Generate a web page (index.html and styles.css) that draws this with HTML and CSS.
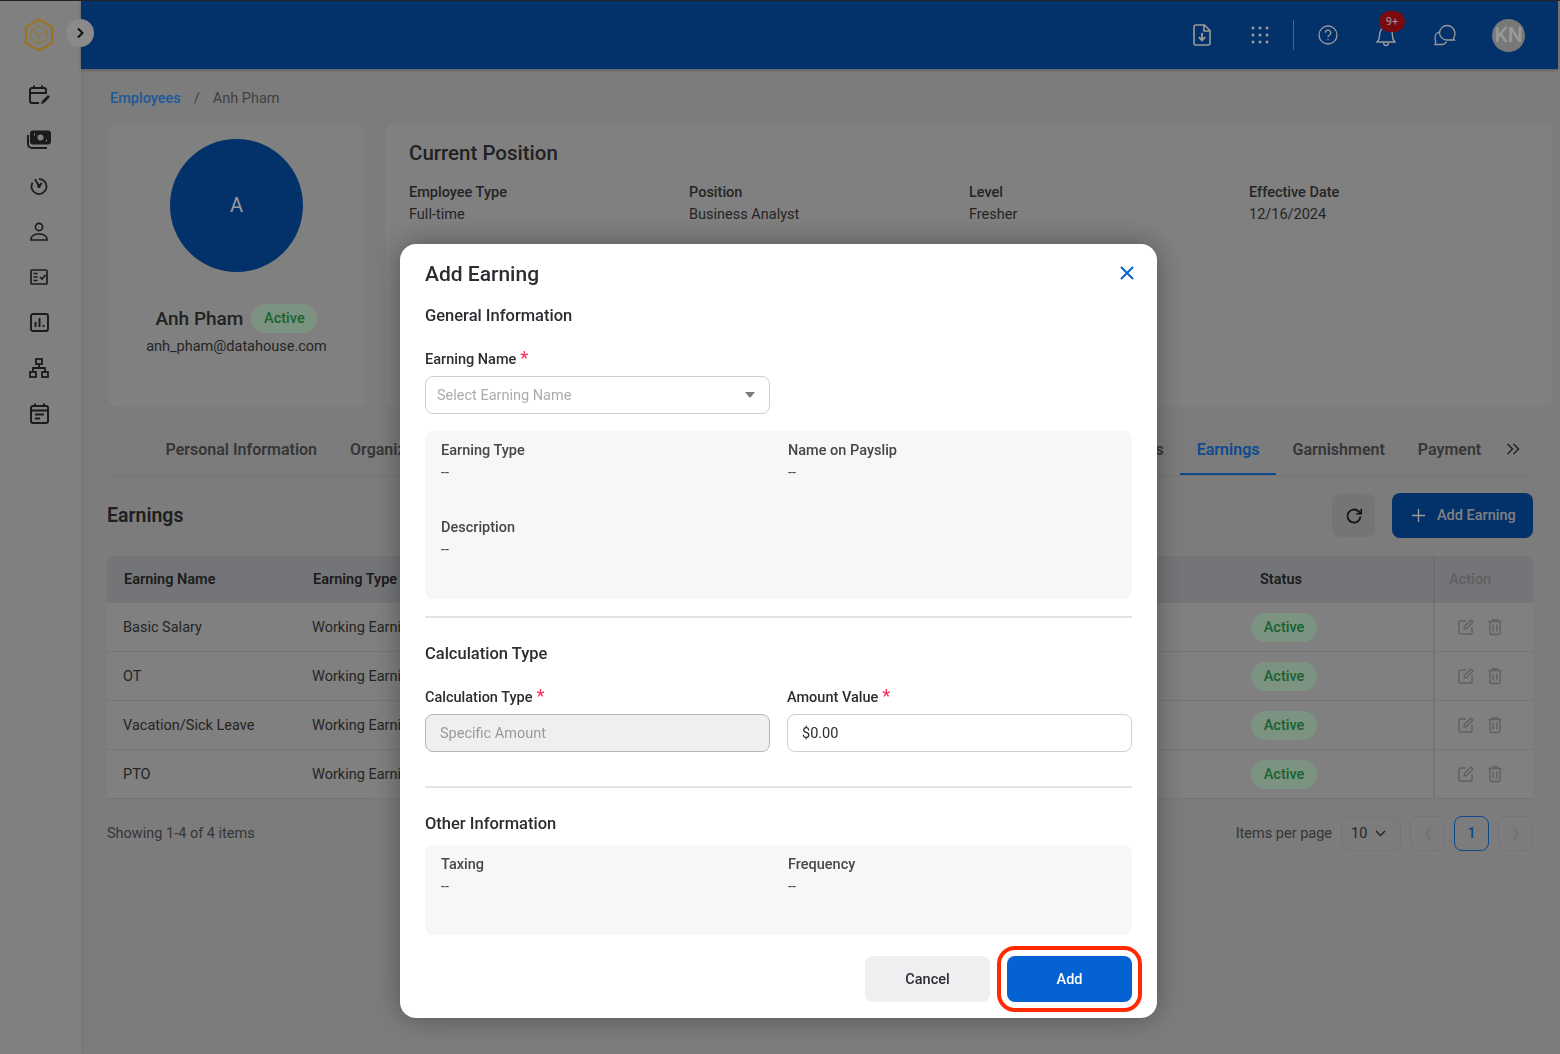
FILE: index.html
```html
<!DOCTYPE html>
<html lang="en">
<head>
  <meta charset="UTF-8">
  <title>Anh Pham - Earnings</title>
  <link rel="stylesheet" href="styles.css">
</head>
<body>
  <svg class="sprite" aria-hidden="true">
    <symbol id="i-edit" viewBox="0 0 18 18">
      <path d="M9 3H3.2A1.2 1.2 0 0 0 2 4.2v10.6A1.2 1.2 0 0 0 3.2 16h10.6a1.2 1.2 0 0 0 1.2-1.2V9" fill="none" stroke="currentColor" stroke-width="1.4"/>
      <path d="M7 11l.5-2.6L14 2l2 2-6.4 6.5z" fill="none" stroke="currentColor" stroke-width="1.3" stroke-linejoin="round"/>
    </symbol>
    <symbol id="i-trash" viewBox="0 0 18 18">
      <path d="M2.5 3.5h13M6.5 3.5V1.8h5v1.7M4 3.5V15a1.5 1.5 0 0 0 1.5 1.5h7A1.5 1.5 0 0 0 14 15V3.5M7.2 6.5v7M10.8 6.5v7" fill="none" stroke="currentColor" stroke-width="1.4"/>
    </symbol>
  </svg>

  <div class="app">
    <aside class="sidebar">
      <div class="logo">
        <svg width="30" height="34" viewBox="0 0 30 34" fill="none" stroke="#ffc23c">
          <path d="M15 1.5 28 9v16l-13 7.5L2 25V9z" stroke-width="2.2"/>
          <path d="M15 8l8 4.5v9L15 26l-8-4.5v-9zM7 12.5l8 4.5 8-4.5M15 17v9" stroke-width="1.2" stroke-opacity=".75"/>
        </svg>
      </div>
      <nav class="side-nav">
        <a class="side-link"><svg width="22" height="22" viewBox="0 0 22 22" fill="none" stroke="#2e2e2e" stroke-width="2"><path d="M11 19H4a2 2 0 0 1-2-2V6a2 2 0 0 1 2-2h12a2 2 0 0 1 2 2v4M2 9h16M6 1.5V5M14 1.5V5"/><path d="M13 20l1-3 6-6 2 2-6 6z" fill="#2e2e2e" stroke="none"/></svg></a>
        <a class="side-link"><svg width="24" height="20" viewBox="0 0 24 20" fill="none" stroke="#2e2e2e" stroke-width="2"><rect x="4" y="1.5" width="19" height="12" rx="2" fill="#2e2e2e"/><circle cx="13.5" cy="7.5" r="3" fill="#d5d5d5" stroke="none"/><path d="M1 5v9a4 4 0 0 0 4 4h15"/><path d="M7 4.5h1M19 10.5h1" stroke="#d5d5d5"/></svg></a>
        <a class="side-link"><svg width="18" height="18" viewBox="0 0 18 18" fill="none" stroke="#2e2e2e" stroke-width="1.8"><path d="M9 2a7.5 7.5 0 1 1-6.4 3.6"/><path d="M5 2.2 9 9l3-3" /><circle cx="9" cy="9" r="1" fill="#2e2e2e"/></svg></a>
        <a class="side-link"><svg width="18" height="19" viewBox="0 0 18 19" fill="none" stroke="#2e2e2e" stroke-width="1.6"><circle cx="9" cy="5" r="3.6"/><path d="M1 18v-1c0-3 3.6-5 8-5s8 2 8 5v1z"/></svg></a>
        <a class="side-link"><svg width="18" height="16" viewBox="0 0 18 16" fill="none" stroke="#2e2e2e" stroke-width="1.7"><rect x="1" y="1" width="16" height="14" rx="1"/><path d="M3.5 4.5h4M3.5 8h4M3.5 11.500h4M10 8l2 2 3.500-4"/></svg></a>
        <a class="side-link"><svg width="19" height="19" viewBox="0 0 19 19" fill="none" stroke="#2e2e2e" stroke-width="1.900"><rect x="1" y="1" width="17" height="17" rx="2"/><path d="M5.500 14V9M9.500 14V5M13.500 14v-2"/></svg></a>
        <a class="side-link"><svg width="20" height="20" viewBox="0 0 20 20" fill="none" stroke="#2e2e2e" stroke-width="1.800"><rect x="7" y="1" width="6" height="5"/><rect x="1" y="14" width="6" height="5"/><rect x="13" y="14" width="6" height="5"/><path d="M10 6v4M4 14v-4h12v4"/></svg></a>
        <a class="side-link"><svg width="19" height="21" viewBox="0 0 19 21" fill="none" stroke="#2e2e2e" stroke-width="2"><rect x="1" y="3" width="17" height="17" rx="2"/><path d="M1 7.500h17M5 .5V4M14 .5V4M5 11.500h9M5 15.500h5"/></svg></a>
      </nav>
    </aside>

    <div class="workspace">
      <header class="topbar">
        <svg class="top-icon" width="18" height="22" viewBox="0 0 18 22" fill="none" stroke="#fff" stroke-width="1.600"><path d="M11.500 1H3a2 2 0 0 0-2 2v16a2 2 0 0 0 2 2h12a2 2 0 0 0 2-2V6.500zM11 1v6h6"/><path d="M9 9v7M5.800 13.200 9 16.500l3.200-3.300" stroke-width="1.900"/></svg>
        <svg class="top-icon top-grid" width="18" height="18" viewBox="0 0 18 18" fill="#fff"><circle cx="2" cy="2" r="1.500"/><circle cx="9" cy="2" r="1.500"/><circle cx="16" cy="2" r="1.500"/><circle cx="2" cy="9" r="1.500"/><circle cx="9" cy="9" r="1.500"/><circle cx="16" cy="9" r="1.500"/><circle cx="2" cy="16" r="1.500"/><circle cx="9" cy="16" r="1.500"/><circle cx="16" cy="16" r="1.500"/></svg>
        <span class="top-divider"></span>
        <svg class="top-icon top-help" width="20" height="20" viewBox="0 0 20 20" fill="none" stroke="#fff" stroke-width="1.300"><circle cx="10" cy="10" r="9"/><path d="M7.300 7.800a2.700 2.700 0 1 1 4 2.400c-.9.500-1.300 1-1.300 2.100M10 14v1.300"/></svg>
        <div class="bell">
          <svg width="20" height="23" viewBox="0 0 20 23" fill="none" stroke="#fff" stroke-width="1.400"><path d="M1 18c2-1.500 2.500-3 2.500-6.500C3.500 6.500 6 3 10 3s6.500 3.500 6.500 8.500c0 3.500.5 5 2.500 6.500zM7.500 18.500c0 4 5 4 5 0"/></svg>
          <span class="badge">9+</span>
        </div>
        <svg class="top-icon top-chat" width="22" height="22" viewBox="0 0 22 22" fill="none" stroke="#fff" stroke-width="1.300"><path d="M13 1.500a8 8 0 0 1 8 7.500c0 2.500-.7 4-1.500 5.500l1 1.500H13a7.500 7.500 0 0 1-7.500-7.300A7.700 7.700 0 0 1 13 1.500z"/><path d="M5 8C2.500 9 1 11 1 14c0 1.300.3 2.400.8 3.300L1 20.500h7c2 0 3.500-1 4.500-3"/></svg>
        <div class="user-avatar">KN</div>
      </header>
      <button class="side-toggle" type="button" aria-label="Expand">
        <svg width="10" height="12" viewBox="0 0 10 12" fill="none" stroke="#1c1c1c" stroke-width="2"><path d="M3 1.500 7.500 6 3 10.500"/></svg>
      </button>

      <main class="content">
        <div class="breadcrumb"><a class="crumb-link">Employees</a><span class="crumb-sep">/</span><span>Anh Pham</span></div>

        <div class="cards">
          <section class="card profile">
            <div class="avatar">A</div>
            <div class="profile-name"><strong>Anh Pham</strong><span class="pill">Active</span></div>
            <div class="profile-mail">anh_pham@datahouse.com</div>
          </section>
          <section class="card position">
            <h2 class="position-title">Current Position</h2>
            <div class="position-grid">
              <div class="pos-field"><span class="pos-label">Employee Type</span><span>Full-time</span></div>
              <div class="pos-field"><span class="pos-label">Position</span><span>Business Analyst</span></div>
              <div class="pos-field"><span class="pos-label">Level</span><span>Fresher</span></div>
              <div class="pos-field pos-date"><span class="pos-label">Effective Date</span><span>12/16/2024</span></div>
            </div>
          </section>
        </div>

        <div class="tabs">
          <div class="tab-list">
            <a class="tab">Personal Information</a>
            <a class="tab">Organization</a>
            <span class="tab-gap"></span>
            <a class="tab">Deductions</a>
            <a class="tab active">Earnings</a>
            <a class="tab">Garnishment</a>
            <a class="tab">Payment</a>
          </div>
          <svg class="tab-more" width="14" height="12" viewBox="0 0 14 12" fill="none" stroke="#3a3a3a" stroke-width="1.500"><path d="M1.500 1 6.500 6l-5 5M7.500 1l5 5-5 5"/></svg>
        </div>

        <div class="toolbar">
          <h2 class="section-title">Earnings</h2>
          <div class="toolbar-actions">
            <button class="btn-refresh" type="button" aria-label="Refresh">
              <svg width="18" height="18" viewBox="0 0 18 18" fill="none" stroke="#1f1f1f" stroke-width="1.800"><path d="M15.500 9.500A6.500 6.500 0 1 1 13.500 4.300L16 6.500"/><path d="M16.300 1.800v5h-5" stroke-width="1.600"/></svg>
            </button>
            <button class="btn-add-earning" type="button">
              <svg width="15" height="15" viewBox="0 0 15 15" stroke="#fff" stroke-width="1.400"><path d="M7.500 1v13M1 7.500h13"/></svg>
              Add Earning
            </button>
          </div>
        </div>

        <div class="table">
          <div class="table-row table-head">
            <div class="cell">Earning Name</div>
            <div class="cell">Earning Type</div>
            <div class="cell">Status</div>
            <div class="cell cell-action">Action</div>
          </div>
          <div class="table-row">
            <div class="cell">Basic Salary</div>
            <div class="cell">Working Earning</div>
            <div class="cell cell-status"><span class="pill">Active</span></div>
            <div class="cell cell-action"><svg width="18" height="18"><use href="#i-edit"/></svg><svg width="18" height="18"><use href="#i-trash"/></svg></div>
          </div>
          <div class="table-row">
            <div class="cell">OT</div>
            <div class="cell">Working Earning</div>
            <div class="cell cell-status"><span class="pill">Active</span></div>
            <div class="cell cell-action"><svg width="18" height="18"><use href="#i-edit"/></svg><svg width="18" height="18"><use href="#i-trash"/></svg></div>
          </div>
          <div class="table-row">
            <div class="cell">Vacation/Sick Leave</div>
            <div class="cell">Working Earning</div>
            <div class="cell cell-status"><span class="pill">Active</span></div>
            <div class="cell cell-action"><svg width="18" height="18"><use href="#i-edit"/></svg><svg width="18" height="18"><use href="#i-trash"/></svg></div>
          </div>
          <div class="table-row">
            <div class="cell">PTO</div>
            <div class="cell">Working Earning</div>
            <div class="cell cell-status"><span class="pill">Active</span></div>
            <div class="cell cell-action"><svg width="18" height="18"><use href="#i-edit"/></svg><svg width="18" height="18"><use href="#i-trash"/></svg></div>
          </div>
        </div>

        <div class="table-foot">
          <span class="foot-text">Showing 1-4 of 4 items</span>
          <div class="pager">
            <span class="foot-text">Items per page</span>
            <div class="page-size">10
              <svg width="11" height="7" viewBox="0 0 11 7" fill="none" stroke="#3a3a3a" stroke-width="1.300"><path d="M1 1l4.500 4.500L10 1"/></svg>
            </div>
            <div class="page-btn"><svg width="8" height="12" viewBox="0 0 8 12" fill="none" stroke="#b5b5b5" stroke-width="1.300"><path d="M6.500 1 1.500 6l5 5"/></svg></div>
            <div class="page-btn current">1</div>
            <div class="page-btn"><svg width="8" height="12" viewBox="0 0 8 12" fill="none" stroke="#b5b5b5" stroke-width="1.300"><path d="M1.500 1l5 5-5 5"/></svg></div>
          </div>
        </div>
      </main>
    </div>
  </div>

  <div class="overlay">
    <div class="modal" role="dialog" aria-label="Add Earning">
      <div class="modal-head">
        <h1 class="modal-title">Add Earning</h1>
        <svg class="modal-close" width="14" height="14" viewBox="0 0 14 14" stroke="#0562d2" stroke-width="2"><path d="M1 1l12 12M13 1 1 13"/></svg>
      </div>

      <h3 class="group-title first">General Information</h3>
      <div class="form-col">
        <label class="form-label">Earning Name<span class="req">*</span></label>
        <div class="control">
          <span class="placeholder">Select Earning Name</span>
          <span class="caret"></span>
        </div>
      </div>
      <div class="info-box">
        <div class="info-field"><span class="info-label">Earning Type</span><span class="info-value">--</span></div>
        <div class="info-field"><span class="info-label">Name on Payslip</span><span class="info-value">--</span></div>
        <div class="info-field"><span class="info-label">Description</span><span class="info-value">--</span></div>
      </div>
      <hr class="rule">

      <h3 class="group-title">Calculation Type</h3>
      <div class="form-row">
        <div class="form-col">
          <label class="form-label">Calculation Type<span class="req">*</span></label>
          <div class="control disabled">Specific Amount</div>
        </div>
        <div class="form-col">
          <label class="form-label">Amount Value<span class="req">*</span></label>
          <div class="control">$0.00</div>
        </div>
      </div>
      <hr class="rule rule-wide">

      <h3 class="group-title">Other Information</h3>
      <div class="info-box info-box-short">
        <div class="info-field"><span class="info-label">Taxing</span><span class="info-value">--</span></div>
        <div class="info-field"><span class="info-label">Frequency</span><span class="info-value">--</span></div>
      </div>

      <div class="modal-foot">
        <button class="btn btn-cancel" type="button">Cancel</button>
        <button class="btn btn-add" type="button">Add</button>
      </div>
    </div>
  </div>
</body>
</html>
```

FILE: styles.css
```css
* {
  box-sizing: border-box;
}

html,
body {
  height: 100%;
}

body {
  margin: 0;
  overflow: hidden;
  font-family: Roboto, "Liberation Sans", sans-serif;
  font-size: 14.5px;
  color: #3e3e3e;
  background: #cfcfcf;
}

a {
  color: inherit;
}

h1,
h2,
h3 {
  margin: 0;
}

.sprite {
  display: none;
}

.app {
  display: flex;
  height: 100%;
  border-top: 1px solid #3f3f3f;
}

/* sidebar */
.sidebar {
  flex: 0 0 81px;
  background: #d5d5d5;
  box-shadow: 1px 0 3px rgba(0, 0, 0, 0.08);
}

.logo {
  display: flex;
  justify-content: center;
  padding-top: 17px;
  padding-right: 3px;
  height: 71px;
}

.side-nav {
  display: flex;
  flex-direction: column;
  padding-top: 0;
}

.side-link {
  display: flex;
  align-items: center;
  justify-content: center;
  height: 45.500px;
  padding-right: 3px;
}

/* top bar */
.workspace {
  position: relative;
  flex: 1;
  min-width: 0;
}

.topbar {
  display: flex;
  align-items: center;
  justify-content: flex-end;
  height: 68px;
  margin-right: 2px;
  padding-right: 33px;
  background: #0552b1;
  box-shadow: 0 1px 3px rgba(0, 0, 0, 0.3);
}

.top-icon {
  flex: none;
}

.top-grid {
  margin-left: 40px;
}

.top-divider {
  width: 1px;
  height: 30px;
  margin: 0 24px 0 24px;
  background: rgba(255, 255, 255, 0.5);
}

.bell {
  position: relative;
  display: flex;
  margin-left: 38px;
}

.badge {
  position: absolute;
  top: -13px;
  left: 3px;
  width: 26px;
  height: 21px;
  border-radius: 11px;
  background: #cc1119;
  color: #fff;
  font-size: 11px;
  line-height: 21px;
  text-align: center;
}

.top-chat {
  margin-left: 38px;
}

.user-avatar {
  width: 33px;
  height: 33px;
  margin-left: 36px;
  border-radius: 50%;
  background: #c8c8c8;
  color: #fff;
  font-size: 21px;
  font-weight: 500;
  line-height: 33px;
  text-align: center;
}

.side-toggle {
  position: absolute;
  top: 18px;
  left: -15px;
  display: flex;
  align-items: center;
  justify-content: center;
  width: 28px;
  height: 28px;
  padding: 0;
  border: 0;
  border-radius: 50%;
  background: #e6e6e6;
}

/* page content */
.content {
  padding: 0 27px 0 26px;
}

.breadcrumb {
  display: flex;
  height: 22px;
  margin-top: 19px;
  margin-left: 3px;
  line-height: 22px;
  color: #6b6b6b;
}

.crumb-link {
  color: #2f95ff;
  font-weight: 500;
}

.crumb-sep {
  margin: 0 13px;
}

.cards {
  display: flex;
  gap: 18px;
  margin-top: 13px;
}

.card {
  height: 285px;
  background: #d5d5d5;
  border: 1px solid #cdcdcd;
  border-radius: 8px;
}

.profile {
  flex: 0 0 259px;
  padding-top: 15px;
  text-align: center;
}

.avatar {
  width: 133px;
  height: 133px;
  margin: 0 auto;
  border-radius: 50%;
  background: #0552b1;
  color: #fff;
  font-size: 20px;
  line-height: 133px;
}

.profile-name {
  display: flex;
  align-items: center;
  justify-content: center;
  gap: 8px;
  margin-top: 32px;
  color: #383838;
  font-size: 19px;
}

.profile-name strong {
  font-weight: 500;
}

.profile-mail {
  margin-top: 3px;
  line-height: 22px;
}

.pill {
  display: inline-block;
  width: 66px;
  height: 29px;
  border-radius: 15px;
  background: #d0f5d9;
  color: #2aa653;
  font-size: 14.500px;
  font-weight: 500;
  line-height: 29px;
  text-align: center;
}

.position {
  flex: 1;
  padding: 15px 24px;
}

.position-title {
  color: #383838;
  font-size: 20.500px;
  font-weight: 500;
  line-height: 28px;
}

.position-grid {
  display: grid;
  grid-template-columns: repeat(4, 280px);
  row-gap: 16px;
  margin-top: 15px;
}

.pos-field {
  display: flex;
  flex-direction: column;
  line-height: 22px;
}

.pos-label {
  font-weight: 500;
}

.pos-date {
  grid-column: 4;
}

/* tabs */
.tabs {
  display: flex;
  align-items: center;
  height: 50px;
  margin-top: 18px;
  border-bottom: 1px solid #c2c2c2;
}

.tab-list {
  display: flex;
  flex: none;
  width: 1385px;
  height: 100%;
  padding-left: 42px;
  overflow: hidden;
}

.tab {
  flex: none;
  height: 49px;
  padding: 0 16.500px;
  color: #5a5a5a;
  font-size: 16px;
  font-weight: 600;
  line-height: 48px;
}

.tab.active {
  border-bottom: 2px solid #157ae8;
  color: #167cef;
}

.tab-gap {
  flex: 0 0 608px;
}

.tab-more {
  margin-left: 14px;
  margin-top: -3px;
}

/* toolbar */
.toolbar {
  display: flex;
  align-items: center;
  justify-content: space-between;
  height: 45px;
  margin-top: 17px;
}

.section-title {
  color: #343434;
  font-size: 19.500px;
  font-weight: 600;
}

.toolbar-actions {
  display: flex;
  align-items: center;
  gap: 17px;
}

.btn-refresh {
  display: flex;
  align-items: center;
  justify-content: center;
  width: 43px;
  height: 43px;
  padding: 0;
  border: 0;
  border-radius: 8px;
  background: #c4c4c4;
}

.btn-add-earning {
  display: flex;
  align-items: center;
  gap: 11px;
  width: 141px;
  height: 45px;
  padding: 0 0 0 19px;
  border: 0;
  border-radius: 8px;
  background: #0552b1;
  color: #d6d6d6;
  font-family: inherit;
  font-size: 14.500px;
  font-weight: 500;
}

/* table */
.table {
  margin-top: 18px;
}

.table-row {
  display: grid;
  grid-template-columns: 189px 947px 190px 100px;
  height: 49px;
  border-bottom: 1px solid #c4c4c4;
  background: #d5d5d5;
}

.cell {
  display: flex;
  align-items: center;
  padding-left: 16px;
  overflow: hidden;
  white-space: nowrap;
}

.cell-status {
  padding-left: 8px;
}

.cell-action {
  gap: 11px;
  padding-left: 22px;
  border-left: 2px solid #c4c4c4;
  color: #a0a0a0;
}

.table-head {
  height: 47px;
  border-bottom: 0;
  border-radius: 8px 8px 0 0;
  background: #c2c4c8;
  color: #2f2f2f;
  font-weight: 600;
}

.table-head .cell {
  padding-left: 17px;
}

.table-head .cell-action {
  padding-left: 14px;
  border-left-color: #b7b9bd;
}

/* pagination */
.table-foot {
  display: flex;
  align-items: center;
  justify-content: space-between;
  margin-top: 17px;
}

.foot-text {
  color: #5a5a5a;
}

.pager {
  display: flex;
  align-items: center;
  gap: 9px;
}

.page-size {
  display: flex;
  align-items: center;
  justify-content: space-between;
  width: 60px;
  height: 34px;
  padding: 0 14px 0 9px;
  border: 1px solid #c4c4c4;
  border-radius: 8px;
  color: #3e3e3e;
}

.page-btn {
  display: flex;
  align-items: center;
  justify-content: center;
  width: 35px;
  height: 35px;
  border: 1px solid #c4c4c4;
  border-radius: 8px;
}

.page-btn.current {
  border-color: #157ae8;
  color: #157ae8;
  font-weight: 500;
}

/* modal */
.overlay {
  position: fixed;
  inset: 0;
  padding: 244px 0 0 400px;
  background: rgba(0, 0, 0, 0.4);
}

.modal {
  width: 757px;
  height: 774px;
  padding: 16px 25px 0;
  border-radius: 16px;
  background: #fff;
  box-shadow: 0 0 28px rgba(0, 0, 0, 0.35);
  color: #2b2d31;
}

.modal-head {
  display: flex;
  align-items: center;
  justify-content: space-between;
  height: 28px;
}

.modal-title {
  font-size: 21px;
  font-weight: 500;
  line-height: 28px;
}

.modal-close {
  margin-right: -2px;
  margin-top: -3px;
}

.group-title {
  height: 24px;
  margin-top: 24px;
  font-size: 16.500px;
  font-weight: 500;
  line-height: 24px;
}

.group-title.first {
  margin-top: 16px;
}

.form-row {
  display: grid;
  grid-template-columns: 345px 345px;
  column-gap: 17px;
}

.form-col {
  width: 345px;
}

.form-label {
  display: block;
  height: 22px;
  margin-top: 21px;
  font-weight: 500;
  line-height: 22px;
}

.req {
  margin-left: 4px;
  color: #f5365c;
  font-size: 18px;
  line-height: 18px;
}

.control {
  display: flex;
  align-items: center;
  justify-content: space-between;
  height: 38px;
  margin-top: 5px;
  padding: 0 14px;
  border: 1px solid #cfcfcf;
  border-radius: 8px;
}

.control.disabled {
  border-color: #b5b5b5;
  background: #eeeff1;
  color: #9a9a9a;
}

.placeholder {
  margin-left: -3px;
  color: #acacac;
}

.caret {
  width: 0;
  height: 0;
  border-left: 5.500px solid transparent;
  border-right: 5.500px solid transparent;
  border-top: 6px solid #7a7a7a;
}

.info-box {
  display: grid;
  grid-template-columns: 347px 1fr;
  grid-auto-rows: 77px;
  height: 168px;
  margin-top: 17px;
  padding: 9px 16px 0;
  border-radius: 8px;
  background: #f7f7f7;
}

.info-box-short {
  height: 90px;
  margin-top: 9px;
}

.info-field {
  display: flex;
  flex-direction: column;
  line-height: 22px;
}

.info-label {
  color: #45474b;
  font-weight: 500;
}

.info-value {
  color: #45474b;
}

.rule {
  height: 2px;
  margin: 17px 0 0;
  border: 0;
  background: #e4e4e4;
}

.rule-wide {
  margin-top: 34px;
}

.modal-foot {
  display: flex;
  justify-content: flex-end;
  gap: 17px;
  margin-top: 21px;
}

.btn {
  width: 125px;
  height: 46px;
  border: 0;
  border-radius: 8px;
  font-family: inherit;
  font-size: 14.500px;
  font-weight: 500;
}

.btn-cancel {
  background: #eeeff1;
  color: #2b2d31;
}

.btn-add {
  background: #0562d2;
  color: #fff;
  outline: 4px solid #ff2a00;
  outline-offset: 6px;
}
```
